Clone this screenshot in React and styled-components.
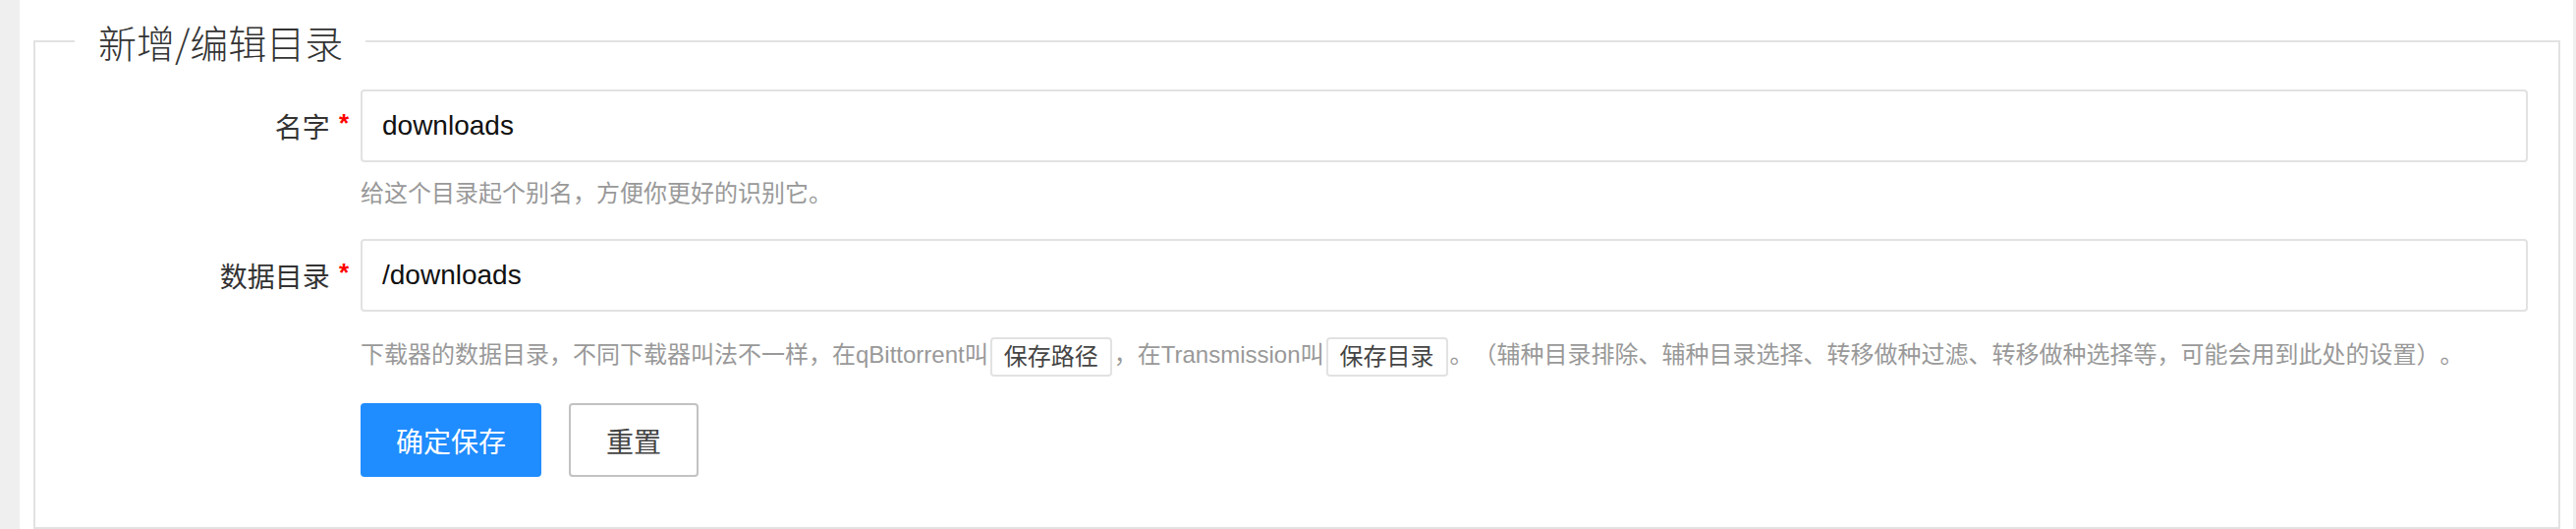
import React from "react";
import styled, { createGlobalStyle } from "styled-components";

const GlobalStyle = createGlobalStyle`
  html, body {
    margin: 0;
    padding: 0;
    background: #efefef;
    font-family: "Liberation Sans", "Noto Sans CJK SC", sans-serif;
    color: #333;
    text-spacing-trim: space-all;
  }
  * { box-sizing: border-box; }
`;

const Page = styled.div`
  padding: 0 3px 0 20px;
`;

const Card = styled.div`
  background: #fff;
  height: 538px;
  padding: 14px 13px 2px 14px;
  overflow: hidden;
`;

const Fieldset = styled.fieldset`
  margin: 0;
  border: 2px solid #e2e2e2;
  padding: 0 31px 51px 0;
  min-width: 0;
`;

const Legend = styled.legend`
  margin-left: 40px;
  padding: 0 23px 0 24px;
  font-family: "Noto Sans CJK SC", sans-serif;
  font-size: 39px;
  font-weight: 300;
  line-height: 56px;
  color: #333;
`;

const Row = styled.div`
  display: flex;
  align-items: flex-start;
  margin-top: ${(p) => p.$top}px;
`;

const Label = styled.label`
  flex: 0 0 331px;
  height: 74px;
  display: flex;
  align-items: center;
  justify-content: flex-end;
  padding-right: 12px;
  font-family: "Noto Sans CJK SC", sans-serif;
  font-size: 28px;
  color: #333;
  white-space: nowrap;
`;

const Required = styled.span`
  color: #ff0000;
  font-family: "Liberation Sans", sans-serif;
  font-weight: bold;
  font-size: 26px;
  margin-left: 9px;
  position: relative;
  top: -3px;
`;

const Control = styled.div`
  flex: 1;
  min-width: 0;
`;

const Input = styled.input`
  display: block;
  width: 100%;
  height: 74px;
  border: 2px solid #e2e2e2;
  border-radius: 4px;
  padding: 0 20px;
  font-family: "Liberation Sans", "Noto Sans CJK SC", sans-serif;
  font-size: 28px;
  color: #111;
  background: #fff;
  outline: none;
`;

const Help = styled.div`
  margin-top: ${(p) => p.$top}px;
  font-size: 24px;
  line-height: 36px;
  color: #999;
  white-space: nowrap;
  text-spacing-trim: space-all;
`;

const Tag = styled.span`
  display: inline-block;
  height: 40px;
  line-height: 36px;
  padding: 0 12px;
  margin: 0 2px;
  border: 2px solid #e2e2e2;
  border-radius: 4px;
  background: #fff;
  color: #444;
  vertical-align: middle;
`;

const Actions = styled.div`
  display: flex;
  gap: 28px;
  margin-top: ${(p) => p.$top}px;
`;

const Button = styled.button`
  height: 75px;
  padding: 0 ${(p) => (p.$primary ? 34 : 36)}px;
  border-radius: 4px;
  font-family: "Noto Sans CJK SC", sans-serif;
  font-size: 28px;
  cursor: pointer;
  border: 2px solid ${(p) => (p.$primary ? "#1f8cff" : "#c2c2c2")};
  background: ${(p) => (p.$primary ? "#1f8cff" : "#fff")};
  color: ${(p) => (p.$primary ? "#fff" : "#444")};
`;

export default function App() {
  return (
    <>
      <GlobalStyle />
      <Page>
        <Card>
          <Fieldset>
            <Legend>新增/编辑目录</Legend>
            <Row $top={21}>
              <Label>
                名字<Required>*</Required>
              </Label>
              <Control>
                <Input defaultValue="downloads" />
                <Help $top={14}>给这个目录起个别名，方便你更好的识别它。</Help>
              </Control>
            </Row>
            <Row $top={28}>
              <Label>
                数据目录<Required>*</Required>
              </Label>
              <Control>
                <Input defaultValue="/downloads" />
                <Help $top={26}>
                  下载器的数据目录，不同下载器叫法不一样，在qBittorrent叫<Tag>保存路径</Tag>，在Transmission叫<Tag>保存目录</Tag>。（辅种目录排除、辅种目录选择、转移做种过滤、转移做种选择等，可能会用到此处的设置）。
                </Help>
                <Actions $top={27}>
                  <Button $primary>确定保存</Button>
                  <Button>重置</Button>
                </Actions>
              </Control>
            </Row>
          </Fieldset>
        </Card>
      </Page>
    </>
  );
}
